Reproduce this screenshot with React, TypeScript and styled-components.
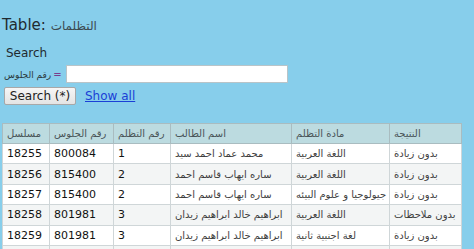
import React from 'react';
import styled, { createGlobalStyle } from 'styled-components';

const GlobalStyle = createGlobalStyle`
  html, body {
    margin: 0;
    padding: 0;
    background: #87ceeb;
    font-family: "DejaVu Sans", Verdana, sans-serif;
    color: #1a1a1a;
    overflow: hidden;
  }
`;

const Page = styled.div`
  padding: 0 2px;
`;

const Title = styled.h2`
  margin: 16px 0 0;
  font-size: 15px;
  line-height: 18px;
  font-weight: normal;
  color: #1f2a30;

  .ar {
    font-size: 12px;
    color: #3c4a50;
  }
`;

const SearchBox = styled.form`
  margin: 10px 0 0;
  padding-left: 4px;
`;

const SearchLabel = styled.div`
  font-size: 12px;
  line-height: 16px;
  color: #1f2a30;
`;

const FieldRow = styled.div`
  display: flex;
  align-items: center;
  gap: 4px;
  margin-top: 4px;
  margin-left: -2px;
  height: 18px;
`;

const FieldName = styled.span`
  font-size: 9px;
  color: #2b3a40;

  .eq {
    font-size: 10px;
    color: #7b3b8c;
    margin-left: 2px;
  }
`;

const TextInput = styled.input`
  box-sizing: border-box;
  width: 222px;
  height: 18px;
  border: 1px solid #b9c4c8;
  background: #fff;
  margin: 0;
  padding: 0 3px;
`;

const ActionRow = styled.div`
  display: flex;
  align-items: center;
  gap: 9px;
  margin-top: 4px;
  margin-left: -2px;
`;

const Button = styled.button`
  box-sizing: border-box;
  width: 72px;
  height: 18px;
  padding: 0;
  font-family: "DejaVu Sans", Verdana, sans-serif;
  font-size: 12px;
  color: #222;
  background: linear-gradient(#f6f6f6, #e4e4e4);
  border: 1px solid #a8a8a8;
  border-radius: 2px;
`;

const Link = styled.a`
  font-size: 12px;
  color: #1a3fd6;
  text-decoration: underline;
`;

const Grid = styled.table`
  margin-top: 18px;
  border-collapse: collapse;
  table-layout: fixed;
  width: 459px;
  background: #fff;
`;

const HeadCell = styled.th<{ w: number }>`
  width: ${({ w }) => w - 9}px;
  height: 19px;
  padding: 0 4px;
  text-align: left;
  font-weight: normal;
  font-size: 10px;
  color: #4a5558;
  background: #bcdbe0;
  border: 1px solid #a9bcc0;
  white-space: nowrap;
  overflow: hidden;
`;

const Row = styled.tr<{ alt: boolean }>`
  background: ${({ alt }) => (alt ? '#f3f5f5' : '#ffffff')};
`;

const Cell = styled.td<{ ar?: boolean }>`
  height: 19.4px;
  padding: 0 4px;
  text-align: left;
  font-size: ${({ ar }) => (ar ? '10px' : '11px')};
  color: ${({ ar }) => (ar ? '#3e3e3e' : '#111')};
  border: 1px solid #cfd6d8;
  white-space: nowrap;
  overflow: hidden;
`;

const columns = [
  { label: 'مسلسل', w: 47 },
  { label: 'رقم الجلوس', w: 64 },
  { label: 'رقم التظلم', w: 57 },
  { label: 'اسم الطالب', w: 121 },
  { label: 'مادة التظلم', w: 98 },
  { label: 'النتيجة', w: 72 },
];

const rows = [
  ['18255', '800084', '1', 'محمد عماد احمد سيد', 'اللغة العربية', 'بدون زيادة'],
  ['18256', '815400', '2', 'ساره ايهاب قاسم احمد', 'اللغة العربية', 'بدون زيادة'],
  ['18257', '815400', '2', 'ساره ايهاب قاسم احمد', 'جيولوجيا و علوم البيئه', 'بدون زيادة'],
  ['18258', '801981', '3', 'ابراهيم خالد ابراهيم زيدان', 'اللغة العربية', 'بدون ملاحظات'],
  ['18259', '801981', '3', 'ابراهيم خالد ابراهيم زيدان', 'لغة اجنبية ثانية', 'بدون زيادة'],
  // next row starts at the bottom edge of the frame, only its borders show
  ['', '', '', '', '', ''],
];

const App = () => (
  <Page>
    <GlobalStyle />
    <Title>
      Table: <span className="ar">التظلمات</span>
    </Title>
    <SearchBox onSubmit={(e) => e.preventDefault()}>
      <SearchLabel>Search</SearchLabel>
      <FieldRow>
        <FieldName>
          رقم الجلوس<span className="eq">=</span>
        </FieldName>
        <TextInput type="text" />
      </FieldRow>
      <ActionRow>
        <Button type="submit">Search (*)</Button>
        <Link href="#">Show all</Link>
      </ActionRow>
    </SearchBox>
    <Grid>
      <thead>
        <tr>
          {columns.map((c) => (
            <HeadCell key={c.label} w={c.w}>{c.label}</HeadCell>
          ))}
        </tr>
      </thead>
      <tbody>
        {rows.map((r, i) => (
          <Row key={i} alt={i % 2 === 1}>
            {r.map((v, j) => (
              <Cell key={j} ar={j > 2}>{v}</Cell>
            ))}
          </Row>
        ))}
      </tbody>
    </Grid>
  </Page>
);

export default App;
